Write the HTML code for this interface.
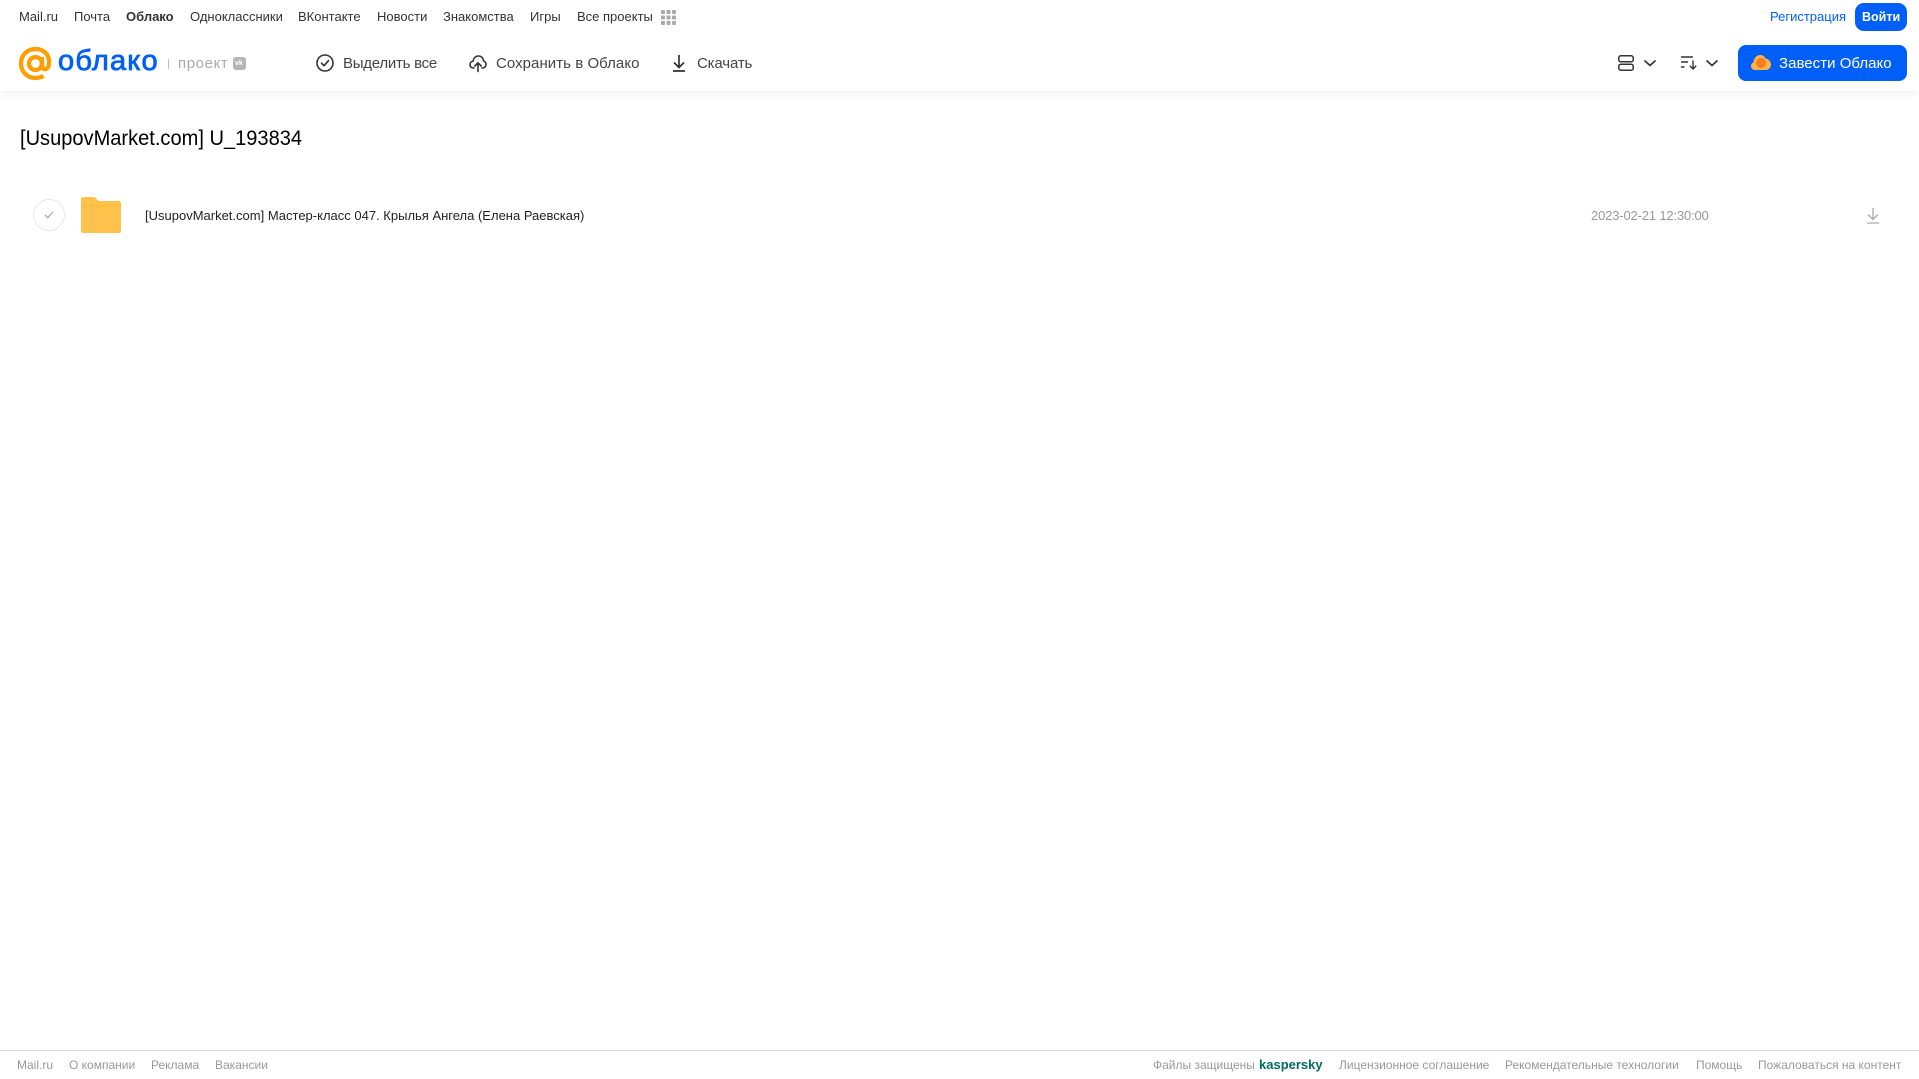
<!DOCTYPE html>
<html lang="ru"><head><meta charset="utf-8"><title>[UsupovMarket.com] U_193834</title>
<style>
html,body{margin:0;padding:0;background:#fff;width:1919px;height:1079px;overflow:hidden}
body{font-family:"Liberation Sans",Arial,sans-serif;position:relative}
.t{position:absolute;white-space:nowrap;line-height:20px}
.n{top:6.5px;font-size:13px;color:#333}
.b{top:54px;font-size:15px;color:#444}
.f{top:1055px;font-size:12px;color:#999}
svg{position:absolute;overflow:visible}
</style></head><body>
<div style="position:absolute;left:0;top:0;width:1919px;height:91px;background:#fff;box-shadow:0 2px 8px rgba(0,0,0,.07)"></div>

<span class="t n" style="left:19px">Mail.ru</span>
<span class="t n" style="left:74px">Почта</span>
<span class="t n" style="left:126px;font-weight:bold">Облако</span>
<span class="t n" style="left:190px">Одноклассники</span>
<span class="t n" style="left:298px">ВКонтакте</span>
<span class="t n" style="left:377px">Новости</span>
<span class="t n" style="left:443px">Знакомства</span>
<span class="t n" style="left:530px">Игры</span>
<span class="t n" style="left:577px">Все проекты</span>
<svg style="left:661px;top:10px" width="15" height="15" fill="#aaa"><rect width="4" height="4" rx="1"/><rect x="5.5" width="4" height="4" rx="1"/><rect x="11" width="4" height="4" rx="1"/><rect y="5.5" width="4" height="4" rx="1"/><rect x="5.5" y="5.5" width="4" height="4" rx="1"/><rect x="11" y="5.5" width="4" height="4" rx="1"/><rect y="11" width="4" height="4" rx="1"/><rect x="5.5" y="11" width="4" height="4" rx="1"/><rect x="11" y="11" width="4" height="4" rx="1"/></svg>
<span class="t n" style="left:1770px;color:#005ff9">Регистрация</span>
<div style="position:absolute;left:1855px;top:3px;width:52px;height:28px;background:#005ff9;border-radius:9px"></div>
<span class="t n" style="left:1862px;color:#fff;font-weight:bold;top:6.5px;font-size:12.5px">Войти</span>

<svg style="left:19px;top:47px" width="33" height="33" viewBox="0 0 33 33" fill="none" stroke="#ff9e00" stroke-width="4.300"><circle cx="16.5" cy="16.5" r="6.5"/><path d="M23 10v8.500c0 5 6.500 5 7-1.500C31 8 25 2 16.500 2 8 2 2 8.500 2 16.500S8 31 16.500 31c3.500 0 6-1 8-2"/></svg>
<span class="t" style="left:58px;top:41.5px;font-size:29px;line-height:38px;color:#005ff9;-webkit-text-stroke:.8px #005ff9;letter-spacing:1.2px">облако</span>
<div style="position:absolute;left:168px;top:59px;width:1px;height:10px;background:#bbb"></div>
<span class="t" style="left:178px;top:54px;font-size:15px;color:#aaa;letter-spacing:.6px">проект</span>
<div style="position:absolute;left:233px;top:57px;width:13px;height:13px;background:#b5b5b5;border-radius:3px"></div>
<span class="t" style="left:235px;top:58px;font-size:7px;line-height:11px;color:#fff;font-weight:bold">vk</span>

<svg style="left:316px;top:54px" width="18" height="18" viewBox="0 0 18 18" fill="none" stroke="#333" stroke-width="1.600"><circle cx="9" cy="9" r="8"/><path d="M5.500 9.200l2.500 2.500 4.500-5" stroke-linecap="round" stroke-linejoin="round"/></svg>
<span class="t b" style="left:343px;letter-spacing:-.25px">Выделить все</span>
<svg style="left:469px;top:54px" width="18" height="18" viewBox="0 0 18 18" fill="none" stroke="#333" stroke-width="1.600" stroke-linecap="round" stroke-linejoin="round"><path d="M5 14H4.500C2.500 14 1 12.500 1 10.600 1 8.800 2.300 7.400 4 7.200 4.500 4.200 6.500 2 9.500 2 12.400 2 14.300 4.300 14.600 7 16 7.300 17 8.700 17 10.300 17 12.300 15.500 14 13.500 14H13"/><path d="M9 17.500V9M5.800 12L9 8.800 12.200 12"/></svg>
<span class="t b" style="left:496px;letter-spacing:.05px">Сохранить в Облако</span>
<svg style="left:671px;top:54px" width="16" height="18" viewBox="0 0 16 18" fill="none" stroke="#333" stroke-width="1.700"><path d="M8 1v12M3 8.500l5 5 5-5M2 17h12"/></svg>
<span class="t b" style="left:697px;letter-spacing:-.15px">Скачать</span>

<svg style="left:1618px;top:55px" width="16" height="16" viewBox="0 0 16 16" fill="none" stroke="#333" stroke-width="1.500"><rect x=".8" y=".8" width="14.400" height="6" rx="2"/><rect x=".8" y="9.200" width="14.400" height="6" rx="2"/></svg>
<svg style="left:1644px;top:60px" width="12" height="7" viewBox="0 0 12 7" fill="none" stroke="#333" stroke-width="1.700" stroke-linecap="round" stroke-linejoin="round"><path d="M1 1l5 4.500L11 1"/></svg>
<svg style="left:1681px;top:56px" width="16" height="14" viewBox="0 0 16 14" fill="none" stroke="#333" stroke-width="1.400"><path d="M0 1h12M0 6h7M0 11h3.500M12 4.500V13M8.800 9.800L12 13l3.200-3.200"/></svg>
<svg style="left:1706px;top:60px" width="12" height="7" viewBox="0 0 12 7" fill="none" stroke="#333" stroke-width="1.700" stroke-linecap="round" stroke-linejoin="round"><path d="M1 1l5 4.500L11 1"/></svg>

<div style="position:absolute;left:1738px;top:45px;width:169px;height:36px;background:#005ff9;border-radius:8px"></div>
<svg style="left:1751px;top:55px" width="20" height="15" viewBox="0 0 20 15"><path d="M4 15C1.800 15 0 13.300 0 11 0 9.200 1 7.800 2.500 7.200 3 3.300 5.500 0 9 0c2.500 0 4.500 1.300 5.500 3.500C17.500 4 20 6.500 20 9.500 20 12.700 17.500 15 14.500 15z" fill="#ffb347"/><circle cx="10" cy="8" r="5" fill="#f57c20"/></svg>
<span class="t b" style="left:1779px;color:#fff;letter-spacing:.03px">Завести Облако</span>

<span class="t" style="left:20px;top:125.500px;font-size:21px;line-height:26px;color:#000;transform:scaleX(.955);transform-origin:0 0">[UsupovMarket.com] U_193834</span>

<div style="position:absolute;left:33px;top:199px;width:30px;height:30px;border:1px solid #e8e8e8;border-radius:50%"></div>
<svg style="left:44px;top:211px" width="10" height="8" viewBox="0 0 11 9" fill="none" stroke="#aaa" stroke-width="1.400"><path d="M1 4.500l3 3L10 1"/></svg>
<svg style="left:81px;top:197px" width="40" height="36" viewBox="0 0 40 36"><path d="M2 0h10c2 0 3 1 4 2.500 1 1 1.500 1.500 3 1.500h19a2 2 0 0 1 2 2v28a2 2 0 0 1-2 2H2a2 2 0 0 1-2-2V2a2 2 0 0 1 2-2z" fill="#ffc24d"/><path d="M0 7.500h40V10H0z" fill="#ffbd42"/></svg>
<span class="t" style="left:145px;top:206px;font-size:13px;color:#222">[UsupovMarket.com] Мастер-класс 047. Крылья Ангела (Елена Раевская)</span>
<span class="t" style="left:1591px;top:206px;font-size:13px;color:#999;letter-spacing:-.16px">2023-02-21 12:30:00</span>
<svg style="left:1866px;top:207px" width="14" height="17" viewBox="0 0 14 17" fill="none" stroke="#aaa" stroke-width="1.300"><path d="M7 1v11M2 7.500l5 5 5-5M1 16h12"/></svg>

<div style="position:absolute;left:0;top:1050px;width:1919px;height:1px;background:#d8d8d8"></div>
<span class="t f" style="left:17px">Mail.ru</span>
<span class="t f" style="left:69px">О компании</span>
<span class="t f" style="left:151px">Реклама</span>
<span class="t f" style="left:215px">Вакансии</span>
<span class="t f" style="left:1153px">Файлы защищены</span>
<span class="t f" style="left:1259px;color:#006d5c;font-weight:bold;font-size:13px">kaspersky</span>
<span class="t f" style="left:1339px">Лицензионное соглашение</span>
<span class="t f" style="left:1505px">Рекомендательные технологии</span>
<span class="t f" style="left:1696px">Помощь</span>
<span class="t f" style="left:1758px">Пожаловаться на контент</span>
</body></html>
